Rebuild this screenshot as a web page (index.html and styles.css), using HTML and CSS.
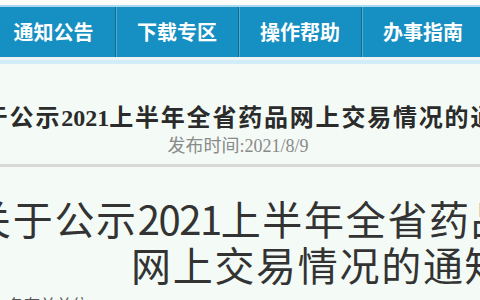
FILE: index.html
```html
<!DOCTYPE html>
<html lang="zh-CN">
<head>
<meta charset="utf-8">
<title>关于公示2021上半年全省药品网上交易情况的通知</title>
<link rel="stylesheet" href="styles.css">
</head>
<body>
<div class="page">
  <div class="topstrip"></div>
  <nav class="nav">
    <a class="nav-item">通知公告</a>
    <a class="nav-item">下载专区</a>
    <a class="nav-item">操作帮助</a>
    <a class="nav-item">办事指南</a>
  </nav>
  <div class="under-a"></div>
  <div class="under-b"></div>
  <main class="article">
    <h2 class="crumb-title">关于公示<span class="num">2021</span>上半年全省药品网上交易情况的通知</h2>
    <div class="meta">发布时间:<span class="num">2021/8/9</span></div>
    <hr class="rule">
    <h1 class="headline">
      <span class="hl-line hl-first">关于公示<span class="hl-num">2021</span>上半年全省药品</span>
      <span class="hl-line hl-second">网上交易情况的通知</span>
    </h1>
    <p class="body-text">各有关单位：</p>
  </main>
</div>
</body>
</html>
```

FILE: styles.css
```css
html, body {
  margin: 0;
  padding: 0;
}
body {
  background: #f4fbf6;
  width: 480px;
  height: 300px;
  overflow: hidden;
  font-family: "Liberation Serif", "Noto Sans CJK SC", serif;
}
.page {
  width: 480px;
  overflow: hidden;
}
.topstrip {
  height: 5px;
  background: #fbfdfd;
}
.nav {
  display: flex;
  height: 50px;
  margin-left: -8px;
  background: #168fc2;
  border-top: 2px solid #a9d9ee;
}
.nav-item {
  flex: 0 0 123px;
  box-sizing: border-box;
  display: flex;
  align-items: center;
  justify-content: center;
  color: #ffffff;
  font-family: "Liberation Serif", "Noto Sans CJK SC", serif;
  font-weight: bold;
  font-size: 20px;
  text-decoration: none;
  padding-bottom: 2px;
}
.nav-item + .nav-item {
  border-left: 1px solid #1f678a;
  box-shadow: inset 1px 0 0 #4aaedb;
}
.under-a {
  height: 3px;
  background: #eff3f4;
}
.under-b {
  height: 4px;
  background: #d3edf8;
}
.article {
  display: block;
}
.crumb-title {
  margin: 39px 0 0 -42px;
  white-space: nowrap;
  font-size: 24px;
  line-height: 30px;
  font-weight: bold;
  letter-spacing: 1.8px;
  color: #2b2b2b;
}
.num {
  font-family: "Liberation Serif", serif;
  letter-spacing: 0;
}
.meta {
  margin-top: 2px;
  text-align: center;
  padding-right: 4px;
  font-size: 18px;
  line-height: 22px;
  color: #8a8a8a;
}
.rule {
  margin: 7px 0 0 0;
  border: 0;
  height: 3px;
  background: #d8d8d8;
}
.headline {
  margin: 28px 0 0 0;
  font-family: "Noto Sans CJK SC", "Noto Sans", sans-serif;
  font-weight: normal;
  font-size: 40px;
  line-height: 46px;
  letter-spacing: 1.7px;
  color: #333333;
  white-space: nowrap;
}
.hl-line {
  display: block;
}
.hl-first {
  margin-left: -29px;
}
.hl-second {
  padding-left: 131px;
}
.hl-num {
  letter-spacing: -1.5px;
}
.body-text {
  margin: 6px 0 0 8px;
  font-family: "Noto Sans CJK SC", sans-serif;
  font-size: 16px;
  line-height: 22px;
  color: #555555;
}
```
